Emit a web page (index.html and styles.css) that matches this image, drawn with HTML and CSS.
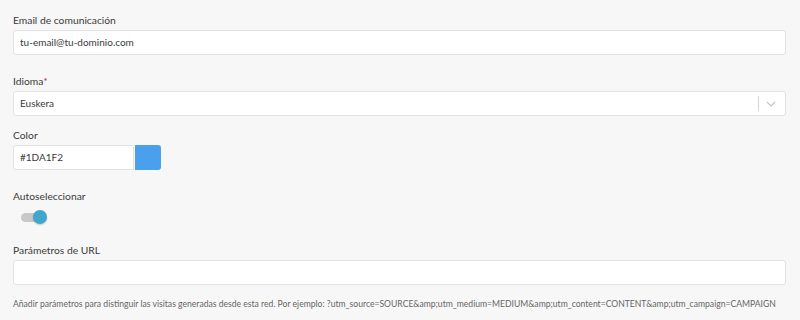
FILE: index.html
```html
<!DOCTYPE html>
<html lang="es">
<head>
    <meta charset="UTF-8">
    <title>Configuración de red</title>
    <link rel="stylesheet" href="styles.css">
</head>
<body>

<div class="form">
    <div class="field">
        <label class="lbl">Email de comunicación</label>
        <div class="input">tu-email@tu-dominio.com</div>
    </div>

    <div class="field field-tight">
        <label class="lbl">Idioma<span class="req">*</span></label>
        <div class="input select">
            <span class="sel-value">Euskera</span>
            <span class="sel-sep"></span>
            <svg class="sel-arrow" width="10" height="6" viewBox="0 0 10 6"><path d="M1 1l4 4 4-4" fill="none" stroke="#c4c4c4" stroke-width="1.2"/></svg>
        </div>
    </div>

    <div class="field">
        <label class="lbl">Color</label>
        <div class="color-row">
            <div class="input color-input">#1DA1F2</div>
            <div class="swatch"></div>
        </div>
    </div>

    <div class="field field-switch">
        <label class="lbl">Autoseleccionar</label>
        <div class="toggle"><span class="knob"></span></div>
    </div>

    <div class="field">
        <label class="lbl">Parámetros de URL</label>
        <div class="input"></div>
        <p class="help">Añadir parámetros para distinguir las visitas generadas desde esta red. Por ejemplo: ?utm_source=SOURCE&amp;amp;utm_medium=MEDIUM&amp;amp;utm_content=CONTENT&amp;amp;utm_campaign=CAMPAIGN</p>
    </div>
</div>

</body>
</html>
```

FILE: styles.css
```css
body {
  margin: 0;
  background: #f7f7f7;
  font-family: Lato, "Open Sans", sans-serif;
  color: #3a3a3a;
}

.form {
  padding: 13px 14px 0 13px;
}

.field {
  margin-bottom: 19px;
}

.field-tight {
  margin-bottom: 12px;
}

.field-switch {
  margin-bottom: 21px;
}

.lbl {
  display: block;
  font-size: 10.3px;
  line-height: 14px;
  margin-bottom: 3px;
  color: #3a3a3a;
}

.req { color: #b0303a; }

.input {
  box-sizing: border-box;
  height: 25px;
  background: #fff;
  border: 1px solid #e3e3e3;
  border-radius: 3px;
  padding: 0 6px;
  font-size: 10px;
  line-height: 23px;
  color: #3a3a3a;
}

.select {
  display: flex;
  align-items: center;
}

.sel-value { flex: 1; }

.sel-sep {
  width: 1px;
  height: 15px;
  background: #d6d6d6;
  margin-right: 7px;
}

.sel-arrow { margin-right: 3px; }

.color-row {
  display: flex;
  align-items: center;
}

.color-input {
  width: 121px;
  border-radius: 3px 0 0 3px;
}

.swatch {
  width: 26px;
  height: 25px;
  background: #4aa0ec;
  border-radius: 0 3px 3px 0;
  margin-left: 1px;
}

.toggle {
  position: relative;
  width: 20px;
  height: 9px;
  margin: 10px 0 0 8px;
  background: #c8c8c8;
  border-radius: 5px;
}

.knob {
  position: absolute;
  top: -3px;
  right: -6px;
  width: 14px;
  height: 14px;
  border-radius: 50%;
  background: #3fa6cc;
  box-shadow: 0 1px 2px rgba(0, 0, 0, 0.2);
}

.help {
  margin: 13px 0 0;
  font-size: 8.6px;
  line-height: 12px;
  color: #666;
  white-space: nowrap;
}
```
